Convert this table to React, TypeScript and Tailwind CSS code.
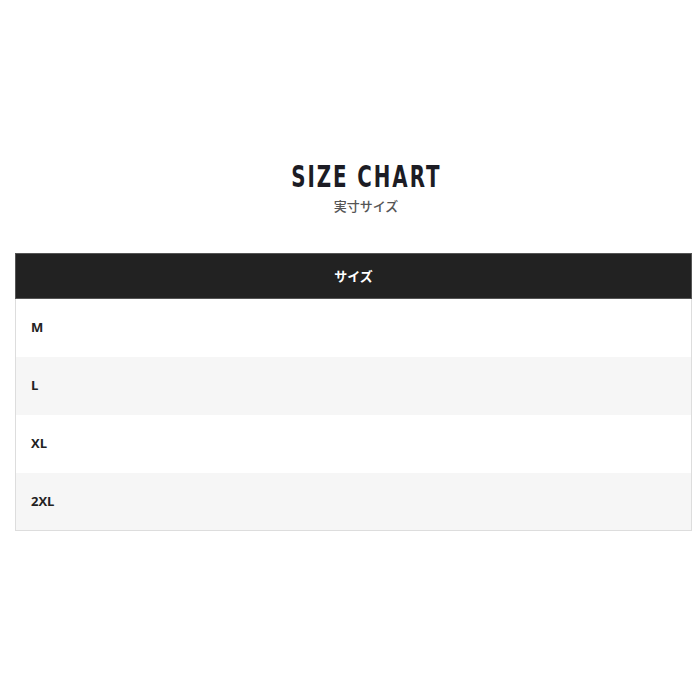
const sizes = ["M", "L", "XL", "2XL"];

export default function App() {
  return (
    <div className="w-[700px] h-[700px] bg-white pt-[158px] px-[15px]">
      <div className="flex flex-col items-center pl-[32px]">
        <h2 className="inline-block scale-x-[0.64] font-['DejaVu_Sans',sans-serif] font-bold text-[31px] leading-[36px] tracking-[3px] text-[#1c1c24]">
          SIZE CHART
        </h2>
        <p className="mt-[4px] font-['Noto_Sans_CJK_JP',sans-serif] font-medium text-[13px] leading-[16px] text-[#555]">
          実寸サイズ
        </p>
      </div>
      <table className="mt-[39px] w-[677px] border-collapse border border-[#ddd] font-['Open_Sans','Noto_Sans_CJK_JP',sans-serif]">
        <thead>
          <tr className="bg-[#222]">
            <th className="h-[45px] border border-[#555] text-white text-[13px] font-bold font-['Noto_Sans_CJK_JP',sans-serif]">
              サイズ
            </th>
          </tr>
        </thead>
        <tbody>
          {sizes.map((s, i) => (
            <tr key={s} className={i % 2 === 0 ? "bg-white" : "bg-[#f6f6f6]"}>
              <td className="h-[58px] px-[15px] text-left text-[13px] font-bold text-[#222]">
                {s}
              </td>
            </tr>
          ))}
        </tbody>
      </table>
    </div>
  );
}
